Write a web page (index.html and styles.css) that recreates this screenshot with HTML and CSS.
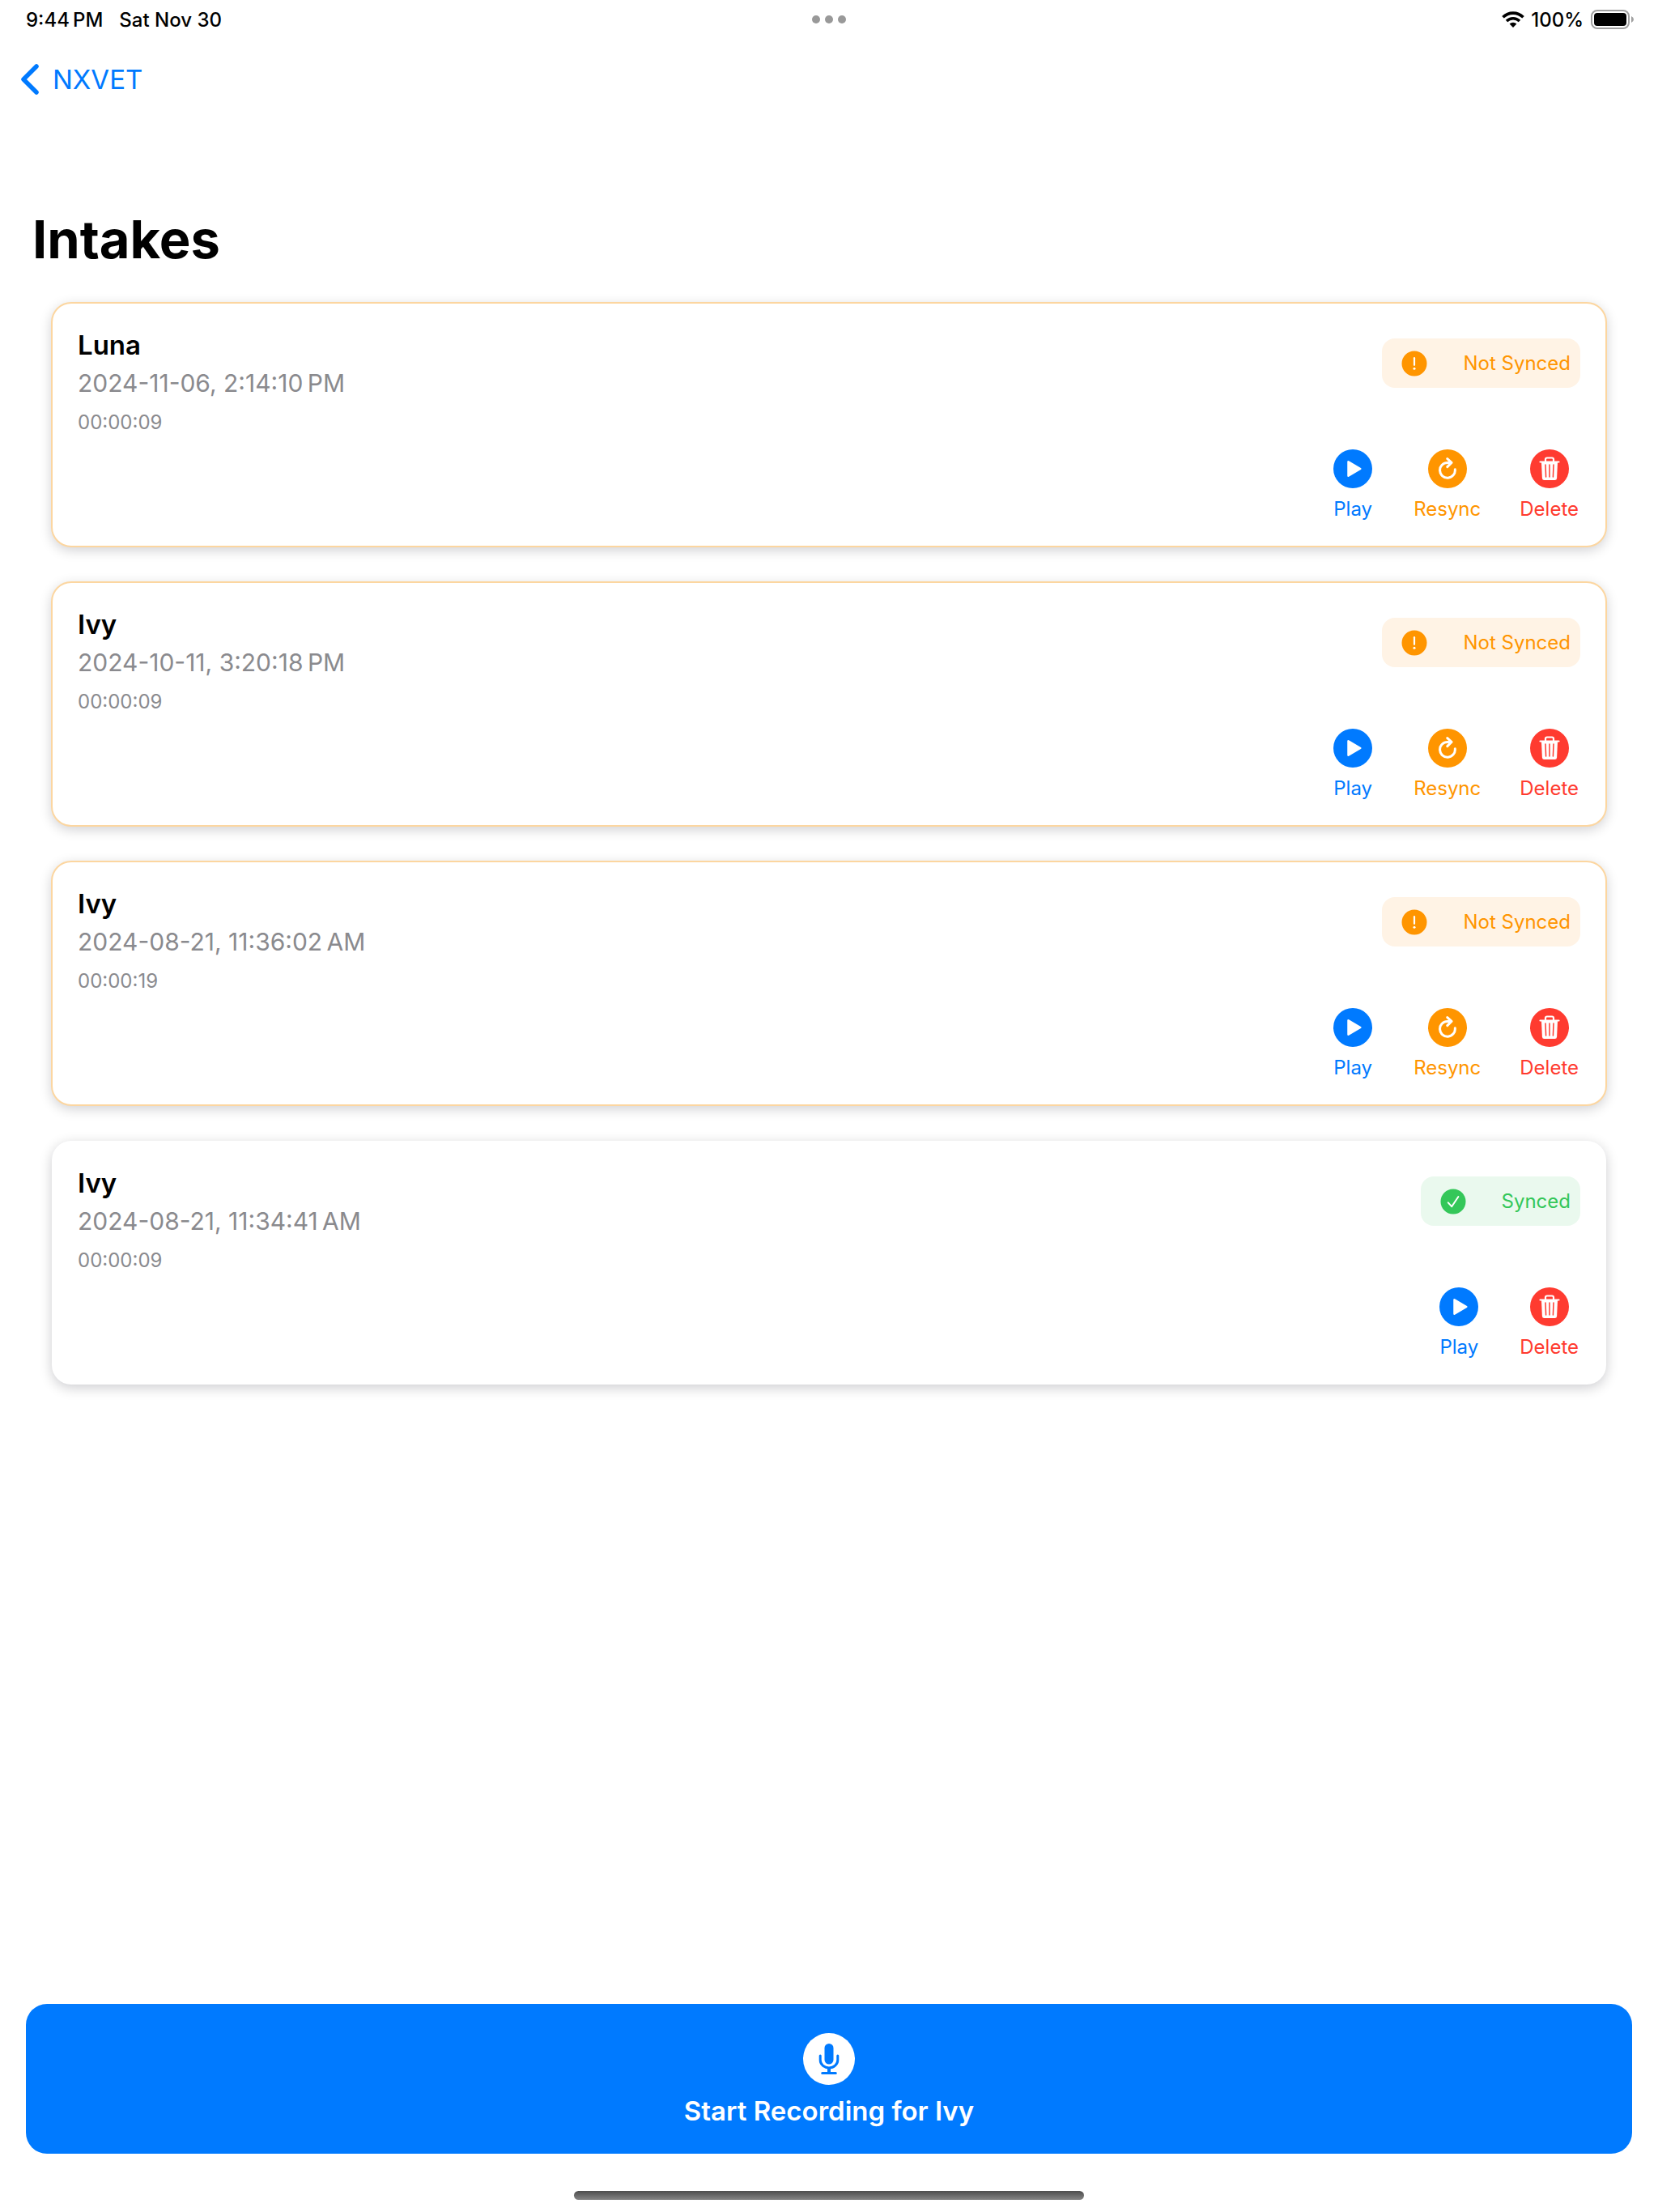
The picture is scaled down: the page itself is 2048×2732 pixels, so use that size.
FILE: index.html
```html
<!DOCTYPE html>
<html lang="en">
<head>
    <meta charset="UTF-8">
    <meta name="viewport" content="width=device-width, initial-scale=1.0">
    <title>Intakes</title>
    <link rel="stylesheet" href="styles.css">
</head>
<body>
    <!-- Shared icons -->
    <svg class="sprite" aria-hidden="true">
        <symbol id="icon-play" viewBox="0 0 48 48">
            <circle cx="24" cy="24" r="24" fill="currentColor"/>
            <path d="M18.500 15.200v17.600l14.800-8.800z" fill="#fff" stroke="#fff" stroke-width="2.500" stroke-linejoin="round"/>
        </symbol>
        <symbol id="icon-resync" viewBox="0 0 48 48">
            <circle cx="24" cy="24" r="24" fill="currentColor"/>
            <path d="M33.300 24.800a9.400 9.400 0 1 1-9.300-8.400h4M23.800 11.600l5.200 4.800-5.200 5.200" fill="none" stroke="#fff" stroke-width="3" stroke-linecap="round" stroke-linejoin="round"/>
        </symbol>
        <symbol id="icon-delete" viewBox="0 0 48 48">
            <circle cx="24" cy="24" r="24" fill="currentColor"/>
            <path d="M19 15.500v-3q0-2 2-2h6q2 0 2 2v3M12.500 15.500h23" fill="none" stroke="#fff" stroke-width="2.200" stroke-linecap="round"/>
            <path d="M14 16h20l-.9 19.500q-.2 2.500-2.600 2.500h-13q-2.400 0-2.600-2.500z" fill="#fff"/>
            <path d="M19 19l.6 15M24 19v15M29 19l-.6 15" fill="none" stroke="currentColor" stroke-width="1.500" stroke-linecap="round"/>
        </symbol>
        <symbol id="icon-alert" viewBox="0 0 32 32">
            <circle cx="16" cy="16" r="15.500" fill="currentColor"/>
            <path d="M16 9.200v8.600" stroke="#fff" stroke-width="2.200" stroke-linecap="round"/>
            <circle cx="16" cy="22.300" r="1.500" fill="#fff"/>
        </symbol>
        <symbol id="icon-check" viewBox="0 0 32 32">
            <circle cx="16" cy="16" r="15.500" fill="currentColor"/>
            <path d="M9.800 17.300l4.400 4.900 8.200-12.200" fill="none" stroke="#fff" stroke-width="2" stroke-linecap="round" stroke-linejoin="round"/>
        </symbol>
    </svg>

    <div class="status-bar">
        <div class="status-left">
            <span>9:44&#8239;PM</span>
            <span>Sat Nov 30</span>
        </div>
        <div class="dots"><i></i><i></i><i></i></div>
        <div class="status-right">
            <svg class="wifi" viewBox="0 0 28 20" aria-hidden="true">
                <path d="M1.500 7.300a17.600 17.600 0 0 1 25 0M6 12a11.400 11.400 0 0 1 16 0" fill="none" stroke="#000" stroke-width="3.600"/>
                <path d="M14 20l-4.400-4.400a6.300 6.300 0 0 1 8.800 0z" fill="#000"/>
            </svg>
            <span>100%</span>
            <svg class="battery" viewBox="0 0 54 24" aria-hidden="true">
                <rect x="2" y="1" width="46" height="22" rx="7" fill="none" stroke="#a0a0a0" stroke-width="2"/>
                <rect x="5" y="4" width="40" height="16" rx="4" fill="#000"/>
                <path d="M51 8q3 1.300 3 4t-3 4z" fill="#a0a0a0"/>
            </svg>
        </div>
    </div>

    <nav class="nav-bar">
        <a class="back" href="#">
            <svg viewBox="0 0 24 40" aria-hidden="true">
                <path d="M21 4L5 20l16 16" fill="none" stroke="currentColor" stroke-width="5.500" stroke-linecap="round" stroke-linejoin="round"/>
            </svg>
            NXVET
        </a>
    </nav>

    <main>
        <h1>Intakes</h1>

        <section class="intakes">
            <article class="card not-synced">
                <div class="info">
                    <h2>Luna</h2>
                    <p class="date">2024-11-06, 2:14:10&#8239;PM</p>
                    <p class="duration">00:00:09</p>
                </div>
                <div class="side">
                    <div class="badge badge-warning"><svg><use href="#icon-alert"/></svg>Not Synced</div>
                    <div class="actions">
                        <button type="button" class="action play"><svg><use href="#icon-play"/></svg>Play</button>
                        <button type="button" class="action resync"><svg><use href="#icon-resync"/></svg>Resync</button>
                        <button type="button" class="action delete"><svg><use href="#icon-delete"/></svg>Delete</button>
                    </div>
                </div>
            </article>

            <article class="card not-synced">
                <div class="info">
                    <h2>Ivy</h2>
                    <p class="date">2024-10-11, 3:20:18&#8239;PM</p>
                    <p class="duration">00:00:09</p>
                </div>
                <div class="side">
                    <div class="badge badge-warning"><svg><use href="#icon-alert"/></svg>Not Synced</div>
                    <div class="actions">
                        <button type="button" class="action play"><svg><use href="#icon-play"/></svg>Play</button>
                        <button type="button" class="action resync"><svg><use href="#icon-resync"/></svg>Resync</button>
                        <button type="button" class="action delete"><svg><use href="#icon-delete"/></svg>Delete</button>
                    </div>
                </div>
            </article>

            <article class="card not-synced">
                <div class="info">
                    <h2>Ivy</h2>
                    <p class="date">2024-08-21, 11:36:02&#8239;AM</p>
                    <p class="duration">00:00:19</p>
                </div>
                <div class="side">
                    <div class="badge badge-warning"><svg><use href="#icon-alert"/></svg>Not Synced</div>
                    <div class="actions">
                        <button type="button" class="action play"><svg><use href="#icon-play"/></svg>Play</button>
                        <button type="button" class="action resync"><svg><use href="#icon-resync"/></svg>Resync</button>
                        <button type="button" class="action delete"><svg><use href="#icon-delete"/></svg>Delete</button>
                    </div>
                </div>
            </article>

            <article class="card">
                <div class="info">
                    <h2>Ivy</h2>
                    <p class="date">2024-08-21, 11:34:41&#8239;AM</p>
                    <p class="duration">00:00:09</p>
                </div>
                <div class="side">
                    <div class="badge badge-success"><svg><use href="#icon-check"/></svg>Synced</div>
                    <div class="actions">
                        <button type="button" class="action play"><svg><use href="#icon-play"/></svg>Play</button>
                        <button type="button" class="action delete"><svg><use href="#icon-delete"/></svg>Delete</button>
                    </div>
                </div>
            </article>
        </section>
    </main>

    <footer>
        <button type="button" class="record">
            <svg viewBox="0 0 64 64" aria-hidden="true">
                <circle cx="32" cy="32" r="32" fill="#fff"/>
                <rect x="26.500" y="13" width="11" height="25.500" rx="5.500" fill="currentColor"/>
                <path d="M21.200 28v5.200a10.800 9.700 0 0 0 21.600 0V28M23.700 49.500h16.600" fill="none" stroke="currentColor" stroke-width="3" stroke-linecap="round"/>
                <path d="M32 43v6" stroke="currentColor" stroke-width="4"/>
            </svg>
            <span>Start Recording for Ivy</span>
        </button>
        <div class="home-indicator"></div>
    </footer>
</body>
</html>
```

FILE: styles.css
```css
* {
    box-sizing: border-box;
}

body {
    display: flex;
    flex-direction: column;
    min-height: 100vh;
    margin: 0;
    font-family: Inter, "Liberation Sans", sans-serif;
    font-size: 24px;
    color: #000;
    background-color: #fff;
}

h1, h2, p {
    margin: 0;
}

button {
    padding: 0;
    border: none;
    background: none;
    font-family: inherit;
    cursor: pointer;
}

.sprite {
    display: none;
}

/* Status bar */
.status-bar {
    display: grid;
    grid-template-columns: 1fr auto 1fr;
    align-items: center;
    height: 48px;
    padding: 0 30px;
    font-weight: 500;
}

.status-left {
    display: flex;
    gap: 20px;
    padding-left: 2px;
}

.dots {
    display: flex;
    gap: 6px;
}

.dots i {
    width: 10px;
    height: 10px;
    border-radius: 50%;
    background-color: #999;
}

.status-right {
    display: flex;
    justify-content: flex-end;
    align-items: center;
    gap: 8px;
}

.wifi {
    width: 28px;
    height: 20px;
}

.battery {
    width: 54px;
    height: 24px;
}

/* Navigation */
.nav-bar {
    display: flex;
    align-items: center;
    height: 100px;
    padding: 0 24px;
}

.back {
    display: flex;
    align-items: center;
    gap: 17px;
    font-size: 33px;
    color: #007aff;
    text-decoration: none;
}

.back svg {
    width: 24px;
    height: 40px;
}

main {
    flex: 1;
    padding-top: 108px;
}

h1 {
    padding: 0 40px;
    font-size: 65px;
    line-height: 80px;
    font-weight: 700;
}

/* Cards */
.intakes {
    display: flex;
    flex-direction: column;
    gap: 44px;
    padding: 38px 64px;
}

.card {
    display: flex;
    justify-content: space-between;
    padding: 30px 32px;
    border-radius: 24px;
    background-color: #fff;
    box-shadow: 0 4px 16px rgba(0, 0, 20, 0.2);
}

.not-synced {
    outline: 2px solid #fcd6a0;
    outline-offset: -1px;
}

h2 {
    font-size: 33px;
    line-height: 44px;
    font-weight: 600;
}

.date {
    font-size: 30px;
    line-height: 50px;
    color: #8a8a8e;
}

.duration {
    line-height: 48px;
    color: #8a8a8e;
}

.side {
    display: flex;
    flex-direction: column;
    align-items: flex-end;
    gap: 76px;
    padding-top: 14px;
}

.badge {
    display: flex;
    align-items: center;
    gap: 44px;
    height: 61px;
    padding: 0 12px 0 24px;
    border-radius: 16px;
}

.badge svg {
    width: 32px;
    height: 32px;
}

.badge-warning {
    color: #ff9500;
    background-color: #fff3e5;
}

.badge-success {
    color: #34c759;
    background-color: #eaf9ee;
}

.actions {
    display: flex;
    gap: 48px;
    padding-right: 2px;
}

.action {
    display: flex;
    flex-direction: column;
    align-items: center;
    gap: 10px;
    min-width: 54px;
    font-size: 24px;
    line-height: 32px;
}

.action svg {
    width: 48px;
    height: 48px;
}

.play {
    color: #007aff;
}

.resync {
    color: #ff9500;
}

.delete {
    color: #ff3b30;
}

/* Bottom bar */
footer {
    display: flex;
    flex-direction: column;
    align-items: center;
    gap: 46px;
    padding: 0 32px 15px;
}

.record {
    display: flex;
    flex-direction: column;
    align-items: center;
    gap: 12px;
    width: 100%;
    padding: 36px 0 33px;
    border-radius: 26px;
    font-size: 33px;
    line-height: 40px;
    font-weight: 600;
    color: #007aff;
    background-color: #007aff;
}

.record span {
    color: #fff;
}

.record svg {
    width: 64px;
    height: 64px;
}

.home-indicator {
    width: 630px;
    max-width: 50%;
    height: 11px;
    border-radius: 6px;
    background: linear-gradient(#4c4c4c, #848484);
}
```
